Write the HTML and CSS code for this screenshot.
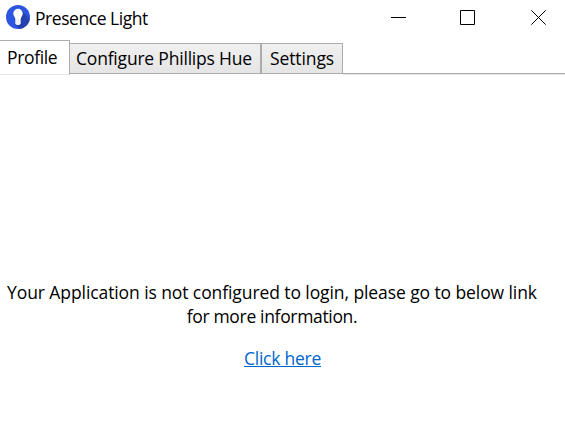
FILE: index.html
```html
<!DOCTYPE html>
<html lang="en">
<head>
<meta charset="utf-8">
<title>Presence Light</title>
<link rel="stylesheet" href="styles.css">
</head>
<body>
<header class="titlebar">
  <svg class="logo" viewBox="0 0 24 24" width="24" height="24" aria-hidden="true">
    <defs><clipPath id="disc"><circle cx="12" cy="12" r="12"/></clipPath></defs>
    <circle cx="12" cy="12" r="12" fill="#2d55df"/>
    <path clip-path="url(#disc)" d="M15.5 5.5L26 16V28H17L9.5 19.5Z" fill="#2443ae"/>
    <path d="M12 3.8a4.7 4.7 0 0 0-4.7 4.7c0 2.6 1.8 3.3 2 5.5h5.4c.2-2.2 2-2.9 2-5.5A4.7 4.7 0 0 0 12 3.8Z" fill="#fff"/>
    <path d="M9.3 14h5.4v4.6l-1.4 1.4h-2.6l-1.4-1.4Z" fill="#f0f2f5"/>
  </svg>
  <h1 class="title">Presence Light</h1>
  <div class="controls">
    <svg class="minimize" viewBox="0 0 15 15" width="15" height="15"><path d="M0 7.5H15"/></svg>
    <svg viewBox="0 0 15 15" width="15" height="15"><path d="M.5 .5H14.5V14.5H.5Z"/></svg>
    <svg class="close" viewBox="0 0 15 15" width="15" height="15"><path d="M.3 .3L14.7 14.7M14.7 .3L.3 14.7"/></svg>
  </div>
</header>
<nav class="tabs">
  <div class="tab selected">Profile</div>
  <div class="tab configure">Configure Phillips Hue</div>
  <div class="tab settings">Settings</div>
  <div class="rest"></div>
</nav>
<main class="content">
  <p class="message"><span class="lead">Your Application is not configured to login, please go to below link</span><br><span class="tail">for more information.</span></p>
  <a class="link" href="#">Click here</a>
</main>
</body>
</html>
```
FILE: styles.css
```css
* { box-sizing: border-box; }
body {
  margin: 0;
  height: 424px;
  overflow: hidden;
  background: #fff;
  color: #000;
  font: 400 17.5px/24px "Open Sans", "Noto Sans", sans-serif;
  letter-spacing: -0.25px;
  white-space: nowrap;
}
.titlebar {
  display: flex;
  height: 40px;
  padding: 5px 19px 0 6px;
}
.logo { flex: none; }
.title {
  margin: 1px 0 0 5px;
  font-size: inherit;
  font-weight: inherit;
  letter-spacing: -0.45px;
}
.controls {
  display: flex;
  margin: 5px 0 0 auto;
}
.controls svg { fill: none; stroke: #000; stroke-width: 1; }
.minimize { margin-right: 54px; }
.close { margin-left: 56px; }
.tabs { display: flex; align-items: flex-end; height: 35px; }
.tab {
  height: 31px;
  padding-top: 2px;
  border: 1px solid #acacac;
  background: linear-gradient(#f0f0f0, #e5e5e5);
}
.tab.selected {
  width: 70px;
  height: 35px;
  padding: 4px 0 0 7px;
  border-left: 0;
  border-bottom: 1px solid #e5e5e5;
  background: #fff;
  letter-spacing: -0.35px;
}
.configure { width: 191px; padding-left: 6px; margin-bottom: 1px; border-left: 0; letter-spacing: -0.2px; }
.settings { width: 82px; padding-left: 8px; margin-bottom: 1px; letter-spacing: -0.1px; }
.rest { flex: 1; height: 2px; border-top: 1px solid #acacac; border-bottom: 1px solid #e5e5e5; }
.content {
  display: flex;
  flex-direction: column;
  align-items: center;
  padding-top: 205px;
}
.message { margin: 0 21px 18px 0; text-align: center; }
.lead { letter-spacing: -0.09px; }
.tail { letter-spacing: -0.33px; }
.link { color: #0066cc; text-decoration-thickness: 1px; text-underline-offset: 1px; text-decoration-skip-ink: none; }
```
